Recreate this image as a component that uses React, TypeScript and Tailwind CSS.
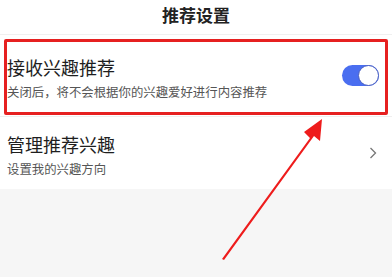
export default function App() {
  return (
    <div
      className="relative w-[392px] h-[277px] overflow-hidden bg-[#f6f6f6]"
      style={{ fontFamily: '"Noto Sans CJK SC", "Noto Sans", sans-serif' }}
    >
      <header className="h-[35px] bg-white flex items-center justify-center border-b border-[#f0f0f0]">
        <h1 className="text-[17px] font-bold text-[#222] leading-none pb-[5px]">推荐设置</h1>
      </header>

      <div className="h-[82px] bg-white flex items-center justify-between pl-[7px] pr-[13px] border-b border-[#efefef]">
        <div className="flex flex-col gap-[3px] pt-[5px]">
          <span className="text-[18px] leading-[24px] text-[#1e1e1e]">接收兴趣推荐</span>
          <span className="text-[12.4px] leading-[20px] text-[#555]">关闭后，将不会根据你的兴趣爱好进行内容推荐</span>
        </div>
        <div className="w-[37px] h-[21px] rounded-full bg-[#4a6ef0] flex items-center justify-end">
          <div className="w-[21px] h-[21px] rounded-full bg-white border-[1.5px] border-[#4a5fc0]" />
        </div>
      </div>

      <div className="h-[72px] bg-white flex items-center justify-between pl-[7px] pr-[15px]">
        <div className="flex flex-col gap-[3px] pt-[5px]">
          <span className="text-[18px] leading-[24px] text-[#1e1e1e]">管理推荐兴趣</span>
          <span className="text-[12.4px] leading-[20px] text-[#555]">设置我的兴趣方向</span>
        </div>
        <svg width="8" height="12" viewBox="0 0 8 12" fill="none">
          <path d="M1.5 1 L6.5 6 L1.5 11" stroke="#777" strokeWidth="1.3" />
        </svg>
      </div>

      {/* annotation */}
      <div className="absolute left-[4px] top-[39px] w-[384px] h-[76px] border-[3px] border-[#e62020] rounded-[2px]" />
      <svg className="absolute left-0 top-0" width="392" height="277" viewBox="0 0 392 277">
        <path d="M222 259 L310 138 L304 132 L322 119 L320 141 L314 136 L224 260 Z" fill="#ee1c1c" />
      </svg>
    </div>
  );
}
